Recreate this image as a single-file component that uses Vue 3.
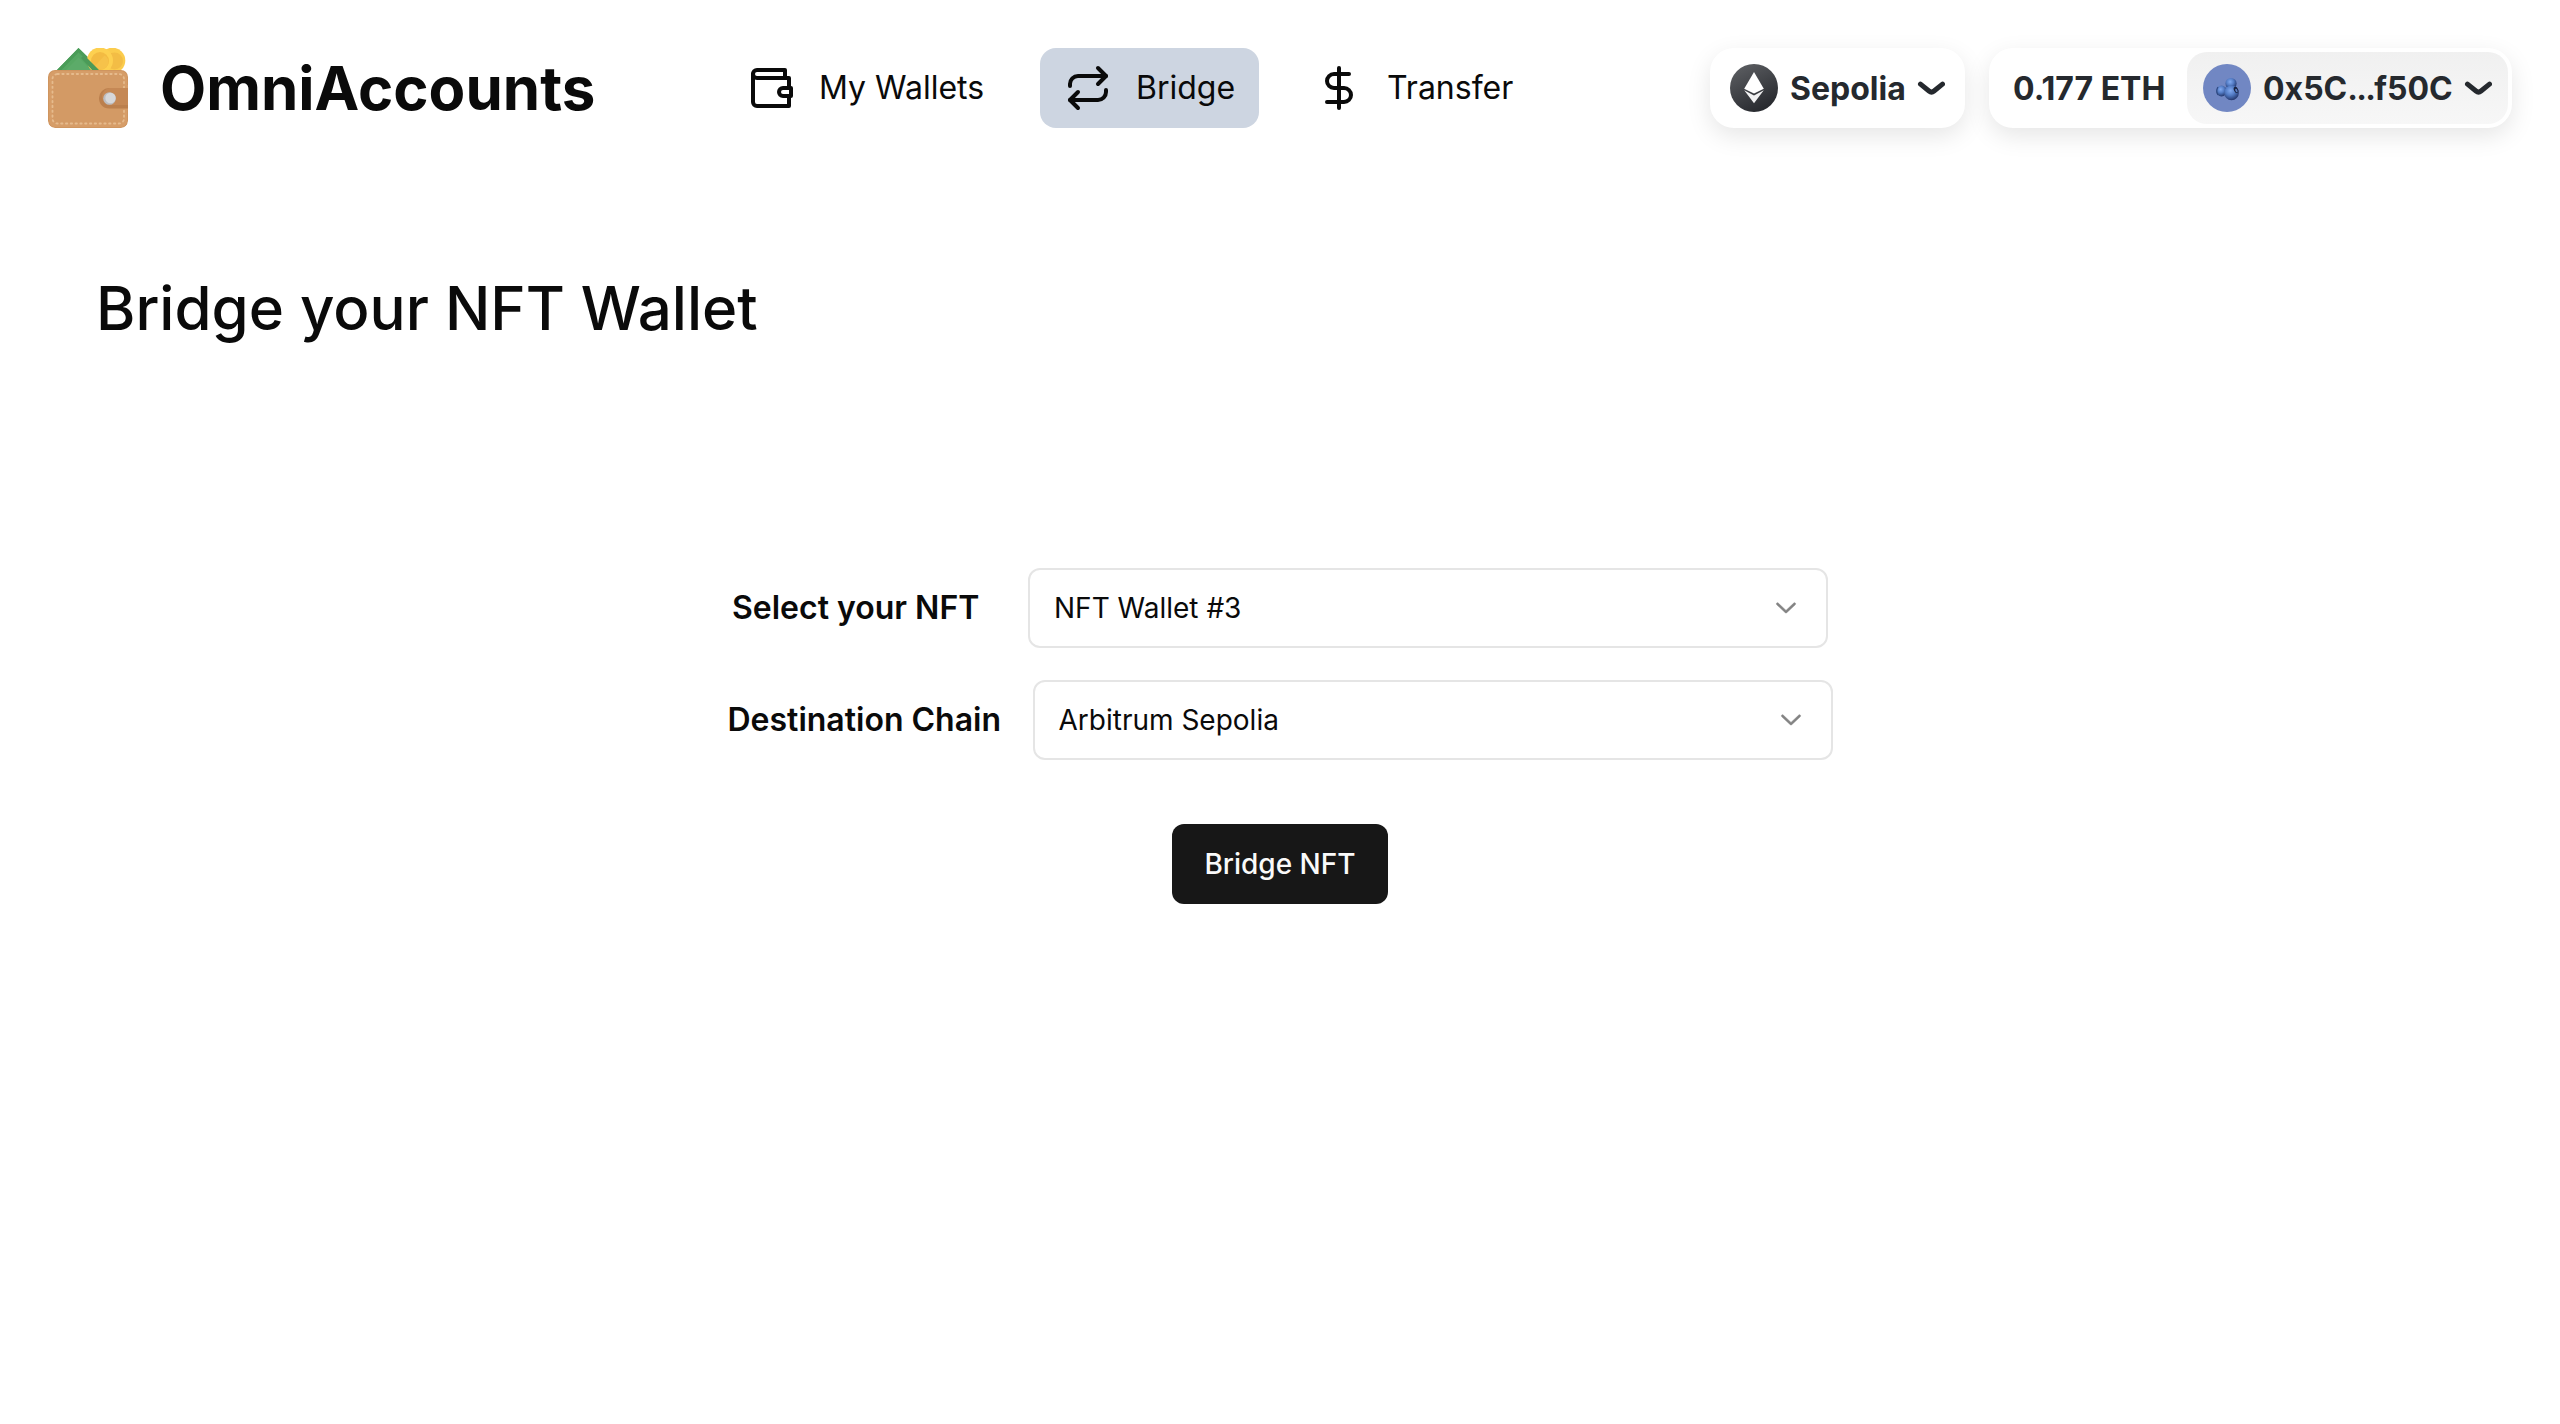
<script setup>
const nav = [
  { id: 'wallets', label: 'My Wallets', paths: ['M21 12V7H5a2 2 0 0 1 0-4h14v4', 'M3 5v14a2 2 0 0 0 2 2h16v-5', 'M18 12a2 2 0 0 0 0 4h4v-4Z'] },
  { id: 'bridge', label: 'Bridge', active: true, paths: ['m17 2 4 4-4 4', 'M3 11v-1a4 4 0 0 1 4-4h14', 'm7 22-4-4 4-4', 'M21 13v1a4 4 0 0 1-4 4H3'] },
  { id: 'transfer', label: 'Transfer', paths: ['M12 2v20', 'M17 5H9.5a3.5 3.5 0 0 0 0 7h5a3.5 3.5 0 0 1 0 7H6'] },
]
const fields = [
  { id: 'nft', label: 'Select your NFT', value: 'NFT Wallet #3' },
  { id: 'destination', label: 'Destination Chain', value: 'Arbitrum Sepolia' },
]
const caret = 'M12.75 1.54001L8.51647 5.0038C7.77974 5.60658 6.72026 5.60658 5.98352 5.0038L1.75 1.54001'
</script>

<template>
  <div class="page">
    <header class="header">
      <a class="brand">
        <svg class="logo" viewBox="0 0 80 80">
          <path d="M8 23 30.500 0 54 23Z" fill="#56a863" />
          <path d="M30.500 0 54 23H50L30.500 4.500 12.500 23H8Z" fill="#4a9c58" />
          <path d="M17 23 30.500 9.500 44 23Z" fill="#5cab69" />
          <circle cx="64.500" cy="12.500" r="12.800" fill="#fbcc4d" />
          <circle cx="66.500" cy="13" r="8.500" fill="#f3bd45" />
          <circle cx="52" cy="12.500" r="13" fill="#fdd050" />
          <circle cx="52" cy="13" r="9" fill="#f3bb42" />
          <path d="M46.500 18.500 56.500 7.500a7.500 7.500 0 0 1-4 14Z" fill="#f6c24a" />
          <path d="M36 7 52 23H45L33 10Z" fill="#4b9a58" />
          <rect y="22" width="80" height="58" rx="7" fill="#cf955f" />
          <rect x="1" y="23" width="78" height="56" rx="6" fill="#d69d68" />
          <rect x="4.500" y="26" width="71.500" height="49.500" rx="5" fill="#d39a65" stroke="#e6bb8d" stroke-width="1.800" stroke-dasharray="1.400 3.400" stroke-linecap="round" />
          <path d="M80 37V62H79V37Z" fill="#d69d68" />
          <path d="M80 40H61a10 10 0 0 0-10 10c0 6 4 10.500 10 10.500h19Z" fill="#bb7f4d" />
          <path d="M80 40H62a9 9 0 0 0-8 8c0 5 4 9 9 9h17Z" fill="#c58855" />
          <circle cx="61.500" cy="50.500" r="6.300" fill="#bdbdc0" />
          <circle cx="62.500" cy="50" r="5.200" fill="#d6d7da" />
        </svg>
        <span class="name">OmniAccounts</span>
      </a>

      <nav class="nav">
        <a v-for="n in nav" :key="n.id" class="link" :class="[n.id, { active: n.active }]">
          <svg class="icon" viewBox="0 0 24 24"><path v-for="p in n.paths" :key="p" :d="p" /></svg>
          <span>{{ n.label }}</span>
        </a>
      </nav>

      <div class="connect">
        <button class="pill chain">
          <svg class="token" viewBox="0 0 48 48">
            <defs>
              <linearGradient id="eth" x1=".2" y1="0" x2=".7" y2="1">
                <stop offset="0" stop-color="#5c5e62" />
                <stop offset="1" stop-color="#25272c" />
              </linearGradient>
            </defs>
            <circle cx="24" cy="24" r="24" fill="url(#eth)" />
            <path d="M24 8 14.200 24.700 24 29.400 33.800 24.700Z" fill="#fff" />
            <path d="M14.200 26.300 24 39.300 33.800 26.300 24 31.500Z" fill="#f1f1f2" />
          </svg>
          <span class="chain-name">Sepolia</span>
          <svg class="caret" viewBox="0 0 14 7"><path :d="caret" /></svg>
        </button>
        <div class="pill account">
          <span class="balance">0.177 ETH</span>
          <button class="address">
            <svg class="avatar" viewBox="0 0 48 48">
              <defs>
                <radialGradient id="ball" cx=".42" cy=".35" r=".65">
                  <stop offset="0" stop-color="#82aaf0" />
                  <stop offset=".5" stop-color="#527bc4" />
                  <stop offset="1" stop-color="#25396f" />
                </radialGradient>
              </defs>
              <circle cx="24" cy="24" r="24" fill="#7187c3" />
              <circle cx="18.500" cy="27" r="5.400" fill="url(#ball)" />
              <path d="M15 23q-2.500 4 0 8" fill="none" stroke="#304a82" stroke-width="1.200" />
              <circle cx="28" cy="19.500" r="5.600" fill="url(#ball)" />
              <circle cx="28.500" cy="28.800" r="7.400" fill="url(#ball)" />
              <ellipse cx="33" cy="25.800" rx="2" ry="3.200" transform="rotate(-25 33 25.800)" fill="#18223f" />
              <ellipse cx="33.400" cy="26.500" rx="1" ry="1.900" transform="rotate(-25 33.400 26.500)" fill="#5a7cc0" />
            </svg>
            <span class="hash">0x5C<span class="dots">...</span>f50C</span>
            <svg class="caret" viewBox="0 0 14 7"><path :d="caret" /></svg>
          </button>
        </div>
      </div>
    </header>

    <main class="main">
      <h1>Bridge your NFT Wallet</h1>
      <form class="form" @submit.prevent>
        <div v-for="f in fields" :key="f.id" class="row" :class="f.id">
          <label>{{ f.label }}</label>
          <div class="select" role="combobox">
            <span>{{ f.value }}</span>
            <svg class="chevron" viewBox="0 0 15 15">
              <path d="M3.13523 6.15803C3.3241 5.95657 3.64052 5.94637 3.84197 6.13523L7.5 9.56464L11.158 6.13523C11.3595 5.94637 11.6759 5.95657 11.8648 6.15803C12.0536 6.35949 12.0434 6.67591 11.842 6.86477L7.84197 10.6148C7.64964 10.7951 7.35036 10.7951 7.15803 10.6148L3.15803 6.86477C2.95657 6.67591 2.94637 6.35949 3.13523 6.15803Z" />
            </svg>
          </div>
        </div>
        <button class="submit">Bridge NFT</button>
      </form>
    </main>
  </div>
</template>

<style>
body { margin: 0; background: #fff; }
</style>

<style scoped>
.page {
  box-sizing: border-box;
  width: 100%;
  min-height: 1424px;
  font-family: Inter, "Liberation Sans", sans-serif;
  font-size: 32px;
  line-height: 48px;
  color: #0a0a0a;
  white-space: nowrap;
}
.page * { box-sizing: border-box; }
button { border: 0; margin: 0; padding: 0; font: inherit; color: inherit; }
svg { display: block; flex: none; }

.header { display: flex; align-items: center; padding: 48px; height: 176px; }
.brand { display: flex; align-items: center; gap: 32px; width: 675px; }
.logo { width: 80px; height: 80px; border-radius: 7px; }
.name { font-size: 60px; line-height: 72px; font-weight: 700; }

.nav { display: flex; gap: 32px; }
.link { display: flex; align-items: center; gap: 24px; height: 80px; padding: 0 24px; border-radius: 16px; }
.wallets { width: 285px; }
.bridge { width: 219px; }
.active { background: #cdd5e1; }
.icon { width: 48px; height: 48px; fill: none; stroke: currentColor; stroke-width: 2; stroke-linecap: round; stroke-linejoin: round; }

.connect { display: flex; gap: 24px; margin-left: auto; color: #25292e; font-weight: 700; font-feature-settings: "calt" 0; }
.connect span { padding-top: 2px; }
.pill { display: flex; align-items: center; height: 80px; border-radius: 24px; background: #fff; box-shadow: 0 8px 24px rgba(0, 0, 0, 0.1); }
.chain { width: 255px; padding: 0 16px 0 20px; }
.token, .avatar { width: 48px; height: 48px; }
.chain-name { width: 127px; padding-left: 12px; text-align: left; }
.caret { width: 28px; height: 14px; fill: none; stroke: currentColor; stroke-width: 2.5; stroke-linecap: round; stroke-linejoin: round; }
.chain .caret { margin-left: 12px; }
.account { width: 523px; padding: 4px; }
.balance { width: 194px; padding-left: 20px; }
.address { display: flex; align-items: center; width: 321px; height: 72px; padding-left: 16px; border-radius: 20px; background: linear-gradient(#f0f0f0, #f7f7f7); }
.hash { width: 201px; padding-left: 12px; text-align: left; }
.dots { letter-spacing: -1.7px; }
.address .caret { margin-left: 12px; }

.main { padding: 96px 96px 0; }
h1 { margin: 0; font-size: 60px; line-height: 72px; font-weight: 500; }
.form { display: flex; flex-direction: column; align-items: center; gap: 32px; margin-top: 224px; }
.row { display: flex; align-items: center; }
label { font-weight: 600; }
.nft label { width: 296px; }
.destination label { width: 305px; }
.select { display: flex; align-items: center; justify-content: space-between; width: 800px; height: 80px; padding: 0 24px; border: 2px solid #e5e5e5; border-radius: 12px; font-size: 28px; line-height: 40px; }
.chevron { width: 32px; height: 32px; margin-bottom: 4px; fill: #0a0a0a; stroke: #0a0a0a; stroke-width: 0.25; opacity: 0.5; }
.submit { width: 216px; height: 80px; margin-top: 32px; border-radius: 12px; background: #171717; color: #fafafa; font-size: 28px; font-weight: 500; }
</style>
